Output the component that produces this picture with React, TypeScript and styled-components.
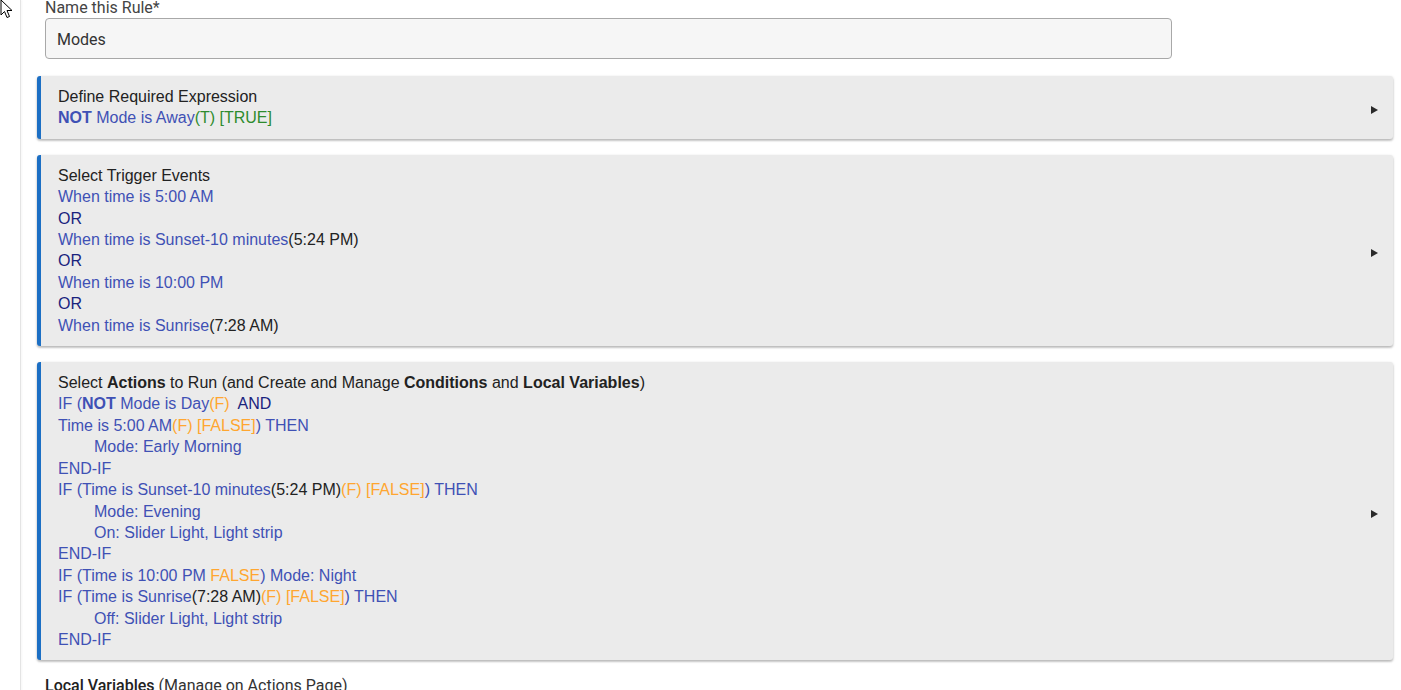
import React from 'react';
import styled, { createGlobalStyle } from 'styled-components';

const GlobalStyle = createGlobalStyle`
  html, body {
    margin: 0;
    padding: 0;
    background: #ffffff;
    overflow: hidden;
  }
  body {
    font-family: Roboto, "Liberation Sans", Arial, sans-serif;
  }
`;

const Page = styled.div`
  display: flex;
  min-height: 100vh;
  position: relative;
`;

const Sidebar = styled.aside`
  width: 20px;
  flex: none;
  background: #ffffff;
  border-right: 1px solid #e4e4e4;
  box-shadow: 1px 0 2px rgba(0, 0, 0, 0.04);
`;

const Main = styled.main`
  flex: 1;
  padding: 0 8px 0 16px;
  display: flex;
  flex-direction: column;
  margin-top: -2px;
`;

const Label = styled.label`
  margin-left: 8px;
  font-size: 16px;
  line-height: 20px;
  color: #444;
`;

const TextInput = styled.input`
  margin: 0 0 0 8px;
  width: 1127px;
  height: 41px;
  box-sizing: border-box;
  padding: 1px 11px 0;
  font-family: Roboto, sans-serif;
  font-size: 16px;
  color: #333;
  background: #f6f6f6;
  border: 1px solid #a8a8a8;
  border-radius: 4px;
  outline: none;
`;

const Card = styled.section<{ $gap: number }>`
  display: flex;
  align-items: center;
  margin-top: ${(p) => p.$gap}px;
  background: #ebebeb;
  border-left: 4px solid #1c6fc4;
  border-radius: 3px;
  box-shadow: 0 2px 2px rgba(0, 0, 0, 0.14), 0 1px 3px rgba(0, 0, 0, 0.2);
  padding: 10px 15px 10px 17px;
`;

const Body = styled.div`
  flex: 1;
  font-family: "Liberation Sans", Arial, sans-serif;
  font-size: 16px;
  line-height: 21.4px;
  color: #222;
`;

const Line = styled.div<{ $indent?: boolean }>`
  padding-left: ${(p) => (p.$indent ? '36px' : '0')};
  white-space: pre;
`;

const tones = {
  text: '#222222',
  blue: '#3f51b5',
  navy: '#1a237e',
  green: '#2e8b2e',
  orange: '#ffa630',
};

const Tok = styled.span<{ $tone: keyof typeof tones; $bold?: boolean }>`
  color: ${(p) => tones[p.$tone]};
  font-weight: ${(p) => (p.$bold ? 700 : 400)};
`;

const Arrow = styled.span`
  width: 0;
  height: 0;
  margin-top: 6px;
  border-top: 4px solid transparent;
  border-bottom: 4px solid transparent;
  border-left: 7px solid #2a2a2a;
`;

const Footer = styled.div`
  margin: 16px 0 0 8px;
  font-size: 16px;
  line-height: 20px;
  color: #333;

  b {
    font-weight: 500;
    color: #222;
  }
`;

const Cursor = styled.svg`
  position: absolute;
  top: -1px;
  left: 0;
`;

const B = (t: string) => <Tok $tone="blue">{t}</Tok>;
const O = (t: string) => <Tok $tone="orange">{t}</Tok>;
const K = (t: string) => <Tok $tone="text">{t}</Tok>;
const N = (t: string) => <Tok $tone="navy">{t}</Tok>;

const App: React.FC = () => {
  return (
    <Page>
      <GlobalStyle />
      <Cursor width="14" height="20" viewBox="0 0 14 20">
        <path d="M1 1 L1 16 L4.5 12.5 L7 18.5 L9.5 17.5 L7 11.5 L12 11.5 Z" fill="#fff" stroke="#000" strokeWidth="1" strokeLinejoin="round" />
      </Cursor>
      <Sidebar />
      <Main>
        <Label>Name this Rule*</Label>
        <TextInput defaultValue="Modes" />

        <Card $gap={17}>
          <Body>
            <Line>Define Required Expression</Line>
            <Line>
              <Tok $tone="blue" $bold>NOT</Tok>
              {B(' Mode is Away')}
              <Tok $tone="green">(T) [TRUE]</Tok>
            </Line>
          </Body>
          <Arrow />
        </Card>

        <Card $gap={16}>
          <Body>
            <Line>Select Trigger Events</Line>
            <Line>{B('When time is 5:00 AM')}</Line>
            <Line>{N('OR')}</Line>
            <Line>{B('When time is Sunset-10 minutes')}{K('(5:24 PM)')}</Line>
            <Line>{N('OR')}</Line>
            <Line>{B('When time is 10:00 PM')}</Line>
            <Line>{N('OR')}</Line>
            <Line>{B('When time is Sunrise')}{K('(7:28 AM)')}</Line>
          </Body>
          <Arrow />
        </Card>

        <Card $gap={16}>
          <Body>
            <Line>
              Select <b>Actions</b> to Run (and Create and Manage <b>Conditions</b> and <b>Local Variables</b>)
            </Line>
            <Line>
              {B('IF (')}
              <Tok $tone="blue" $bold>NOT</Tok>
              {B(' Mode is Day')}{O('(F)')}{N('  AND')}
            </Line>
            <Line>{B('Time is 5:00 AM')}{O('(F) [FALSE]')}{B(') THEN')}</Line>
            <Line $indent>{B('Mode: Early Morning')}</Line>
            <Line>{B('END-IF')}</Line>
            <Line>{B('IF (Time is Sunset-10 minutes')}{K('(5:24 PM)')}{O('(F) [FALSE]')}{B(') THEN')}</Line>
            <Line $indent>{B('Mode: Evening')}</Line>
            <Line $indent>{B('On: Slider Light, Light strip')}</Line>
            <Line>{B('END-IF')}</Line>
            <Line>{B('IF (Time is 10:00 PM ')}{O('FALSE')}{B(') Mode: Night')}</Line>
            <Line>{B('IF (Time is Sunrise')}{K('(7:28 AM)')}{O('(F) [FALSE]')}{B(') THEN')}</Line>
            <Line $indent>{B('Off: Slider Light, Light strip')}</Line>
            <Line>{B('END-IF')}</Line>
          </Body>
          <Arrow />
        </Card>

        <Footer>
          <b>Local Variables</b> (Manage on Actions Page)
        </Footer>
      </Main>
    </Page>
  );
};

export default App;
